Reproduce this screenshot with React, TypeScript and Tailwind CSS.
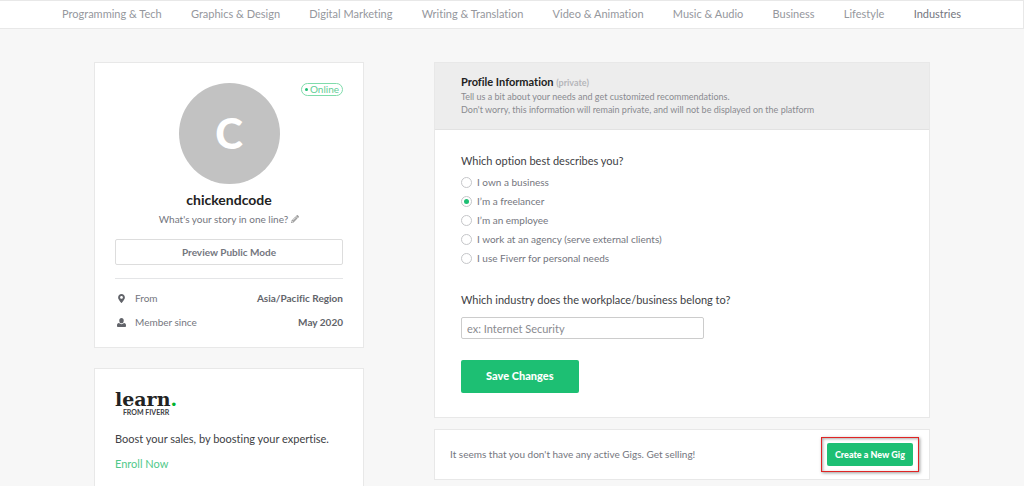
import { FaMapMarkerAlt, FaPencilAlt } from "react-icons/fa";

const categories = [
  "Programming & Tech",
  "Graphics & Design",
  "Digital Marketing",
  "Writing & Translation",
  "Video & Animation",
  "Music & Audio",
  "Business",
  "Lifestyle",
];

const roles = [
  "I own a business",
  "I’m a freelancer",
  "I’m an employee",
  "I work at an agency (serve external clients)",
  "I use Fiverr for personal needs",
];

function UserIcon() {
  return (
    <svg viewBox="0 0 16 16" className="h-[9px] w-[9px] fill-[#62646a]" aria-hidden="true">
      <path d="M8 0C10.500 0 12 2 12 4.700S10.300 9.500 8 9.500 4 7.400 4 4.700 5.500 0 8 0ZM3.500 9C4.700 10.200 6.200 10.900 8 10.900s3.300-.7 4.500-1.900C15 9.400 16 11 16 13v1.500c0 .8-.6 1.500-1.500 1.500h-13C.6 16 0 15.300 0 14.500V13c0-2 1-3.600 3.500-4Z" />
    </svg>
  );
}

function Navbar() {
  return (
    <nav className="flex justify-between border-y border-r border-[#e8e8e8] bg-white px-[62px] pt-1 pb-[6px] text-[11px] leading-[17px] text-[#95979d]">
      {categories.map((name) => (
        <a key={name} href="#">
          {name}
        </a>
      ))}
      <a href="#" className="text-[#74767e]">
        Industries
      </a>
    </nav>
  );
}

function ProfileCard() {
  return (
    <section className="relative border border-[#e8e8e8] bg-white px-5 pt-5 pb-[17px]">
      <span className="absolute top-5 right-5 flex h-[13px] items-center gap-[2px] rounded-full border border-[#7fdcab] px-[3px] text-[10px] text-[#5fce95]">
        <span className="h-[3px] w-[3px] rounded-full bg-[#1dbf73]" />
        Online
      </span>
      <div className="mx-auto flex h-[101px] w-[101px] items-center justify-center rounded-full bg-[#c2c2c2] text-[42px] font-black text-white">
        C
      </div>
      <h1 className="mt-2 text-center text-[14px] leading-4 font-bold text-[#222222]">chickendcode</h1>
      <p className="mt-[3px] flex items-center justify-center gap-[3px] text-[10px] leading-4 text-[#74767e]">
        What's your story in one line?
        <button type="button" aria-label="Edit story">
          <FaPencilAlt className="h-2 w-2 text-[#a0a0a0]" />
        </button>
      </p>
      <button
        type="button"
        className="mt-3 h-[26px] w-full rounded-xs border border-[#dddddd] text-[10px] font-bold text-[#74767e]"
      >
        Preview Public Mode
      </button>
      <dl className="mt-[13px] border-t border-[#e4e5e7] pt-[11px] text-[10px] leading-4">
        <div className="flex items-center justify-between">
          <dt className="flex items-center gap-[9px] pl-[2px] text-[#74767e]">
            <FaMapMarkerAlt className="h-[9px] w-[9px] text-[#62646a]" aria-hidden="true" />
            From
          </dt>
          <dd className="font-bold text-[#62646a]">Asia/Pacific Region</dd>
        </div>
        <div className="mt-2 flex items-center justify-between">
          <dt className="flex items-center gap-[9px] pl-[2px] text-[#74767e]">
            <UserIcon />
            Member since
          </dt>
          <dd className="font-bold text-[#62646a]">May 2020</dd>
        </div>
      </dl>
    </section>
  );
}

function LearnCard() {
  return (
    <section className="flex-1 border border-b-0 border-[#e8e8e8] bg-white px-5 pt-5">
      <div className="w-fit">
        <p className="font-['DejaVu_Serif'] text-[19px] leading-5 font-bold text-[#222222]">
          learn<span className="text-[#00b22d]">.</span>
        </p>
        <p className="text-center text-[7px] leading-[7px] font-bold text-[#404145]">FROM FIVERR</p>
      </div>
      <p className="mt-[13px] text-[11px] leading-5 text-[#404145]">Boost your sales, by boosting your expertise.</p>
      <a href="#" className="mt-[5px] block text-[11px] leading-5 text-[#4fc98a]">
        Enroll Now
      </a>
    </section>
  );
}

function ProfileForm() {
  return (
    <form className="border border-[#e8e8e8] bg-white">
      <header className="border-b border-[#e2e2e2] bg-[#ededed] px-[26px] pt-3 pb-[13px] text-[9px] leading-[13px] text-[#8a8b90]">
        <h2 className="text-[11px] leading-[14px] font-bold text-[#222222]">
          Profile Information <small className="text-[9px] text-[#b5b6ba]">(private)</small>
        </h2>
        <p>Tell us a bit about your needs and get customized recommendations.</p>
        <p>Don't worry, this information will remain private, and will not be displayed on the platform</p>
      </header>
      <div className="px-[26px] pt-[23px] pb-6">
        <fieldset>
          <legend className="text-[11px] leading-4 text-[#404145]">Which option best describes you?</legend>
          <div className="mt-1 text-[10px] leading-[19px] text-[#74767e]">
            {roles.map((role) => (
              <label key={role} className="flex items-center gap-[5px]">
                <input
                  type="radio"
                  name="role"
                  defaultChecked={role === roles[1]}
                  className="h-[11px] w-[11px] appearance-none rounded-full border border-[#c5c6c9] bg-white bg-clip-content p-[2px] checked:bg-[#1dbf73]"
                />
                {role}
              </label>
            ))}
          </div>
        </fieldset>
        <label htmlFor="industry" className="mt-6 block text-[11px] leading-4 text-[#404145]">
          Which industry does the workplace/business belong to?
        </label>
        <input
          id="industry"
          type="text"
          placeholder="ex: Internet Security"
          className="mt-[9px] block h-[22px] w-[243px] rounded-xs border border-[#cccccc] px-[5px] text-[11px] placeholder:text-[#8a8b90]"
        />
        <button
          type="button"
          className="mt-[21px] block h-[33px] rounded-xs bg-[#1dbf73] px-[25px] text-[11px] font-black text-white"
        >
          Save Changes
        </button>
      </div>
    </form>
  );
}

function GigBanner() {
  return (
    <section className="flex items-center justify-between border border-[#e8e8e8] bg-white py-[7px] pr-[10px] pl-[15px]">
      <p className="text-[10px] text-[#74767e]">It seems that you don't have any active Gigs. Get selling!</p>
      <div className="border border-[#e02424] p-[5px] shadow-[1px_1px_3px_#0006,inset_1px_1px_3px_#0005]">
        <button type="button" className="block h-[23px] rounded-xs bg-[#1dbf73] px-2 text-[9px] font-black text-white">
          Create a New Gig
        </button>
      </div>
    </section>
  );
}

export default function App() {
  return (
    <div className="flex min-h-screen flex-col bg-[#f7f7f7] font-[Lato,sans-serif] [font-variant-ligatures:none]">
      <Navbar />
      <main className="mx-auto grid w-full max-w-[836px] flex-1 grid-cols-[270px_1fr] gap-[70px] pt-[33px]">
        <div className="flex flex-col gap-5">
          <ProfileCard />
          <LearnCard />
        </div>
        <div className="flex flex-col gap-[11px]">
          <ProfileForm />
          <GigBanner />
        </div>
      </main>
    </div>
  );
}
